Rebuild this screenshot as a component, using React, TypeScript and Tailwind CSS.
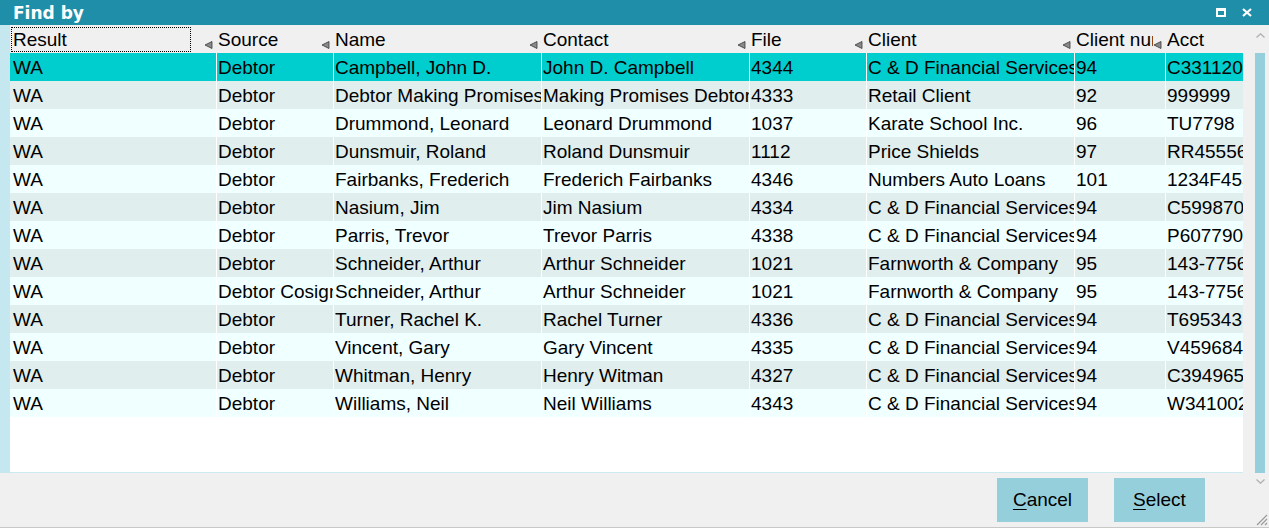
import React from "react";

const cols = [
  { key: "result", label: "Result", w: "w-[206px]", arrow: true },
  { key: "source", label: "Source", w: "w-[117px]", arrow: true },
  { key: "name", label: "Name", w: "w-[208px]", arrow: true },
  { key: "contact", label: "Contact", w: "w-[208px]", arrow: true },
  { key: "file", label: "File", w: "w-[117px]", arrow: true },
  { key: "client", label: "Client", w: "w-[208px]", arrow: true },
  { key: "clientnum", label: "Client number", w: "w-[91px]", arrow: true },
  { key: "acct", label: "Acct", w: "w-[78px]", arrow: false },
];

const CD = "C & D Financial Services";
const rows: string[][] = [
  ["WA", "Debtor", "Campbell, John D.", "John D. Campbell", "4344", CD, "94", "C331120"],
  ["WA", "Debtor", "Debtor Making Promises", "Making Promises Debtor", "4333", "Retail Client", "92", "999999"],
  ["WA", "Debtor", "Drummond, Leonard", "Leonard Drummond", "1037", "Karate School Inc.", "96", "TU7798"],
  ["WA", "Debtor", "Dunsmuir, Roland", "Roland Dunsmuir", "1112", "Price Shields", "97", "RR455561"],
  ["WA", "Debtor", "Fairbanks, Frederich", "Frederich Fairbanks", "4346", "Numbers Auto Loans", "101", "1234F453"],
  ["WA", "Debtor", "Nasium, Jim", "Jim Nasium", "4334", CD, "94", "C599870"],
  ["WA", "Debtor", "Parris, Trevor", "Trevor Parris", "4338", CD, "94", "P607790"],
  ["WA", "Debtor", "Schneider, Arthur", "Arthur Schneider", "1021", "Farnworth & Company", "95", "143-77561"],
  ["WA", "Debtor Cosigner", "Schneider, Arthur", "Arthur Schneider", "1021", "Farnworth & Company", "95", "143-77561"],
  ["WA", "Debtor", "Turner, Rachel K.", "Rachel Turner", "4336", CD, "94", "T695343"],
  ["WA", "Debtor", "Vincent, Gary", "Gary Vincent", "4335", CD, "94", "V459684"],
  ["WA", "Debtor", "Whitman, Henry", "Henry Witman", "4327", CD, "94", "C394965"],
  ["WA", "Debtor", "Williams, Neil", "Neil Williams", "4343", CD, "94", "W341002"],
];

function SortArrow() {
  return (
    <svg width="9" height="8" viewBox="0 0 9 8" className="shrink-0 mb-[4px] mr-[3px]">
      <polygon points="8,0.5 8,7.5 1,4" fill="#8a8a8a" stroke="#3a3a3a" strokeWidth="0.8" />
    </svg>
  );
}

function Chevron({ up }: { up?: boolean }) {
  return (
    <svg width="9" height="5" viewBox="0 0 9 5">
      <polyline
        points={up ? "0.5,4.5 4.5,0.8 8.5,4.5" : "0.5,0.5 4.5,4.2 8.5,0.5"}
        fill="none"
        stroke="#b0b0b0"
        strokeWidth="1.3"
      />
    </svg>
  );
}

export default function App() {
  return (
    <div
      className="w-[1269px] h-[528px] bg-[#f0f0f0] flex flex-col overflow-hidden text-black"
      style={{ fontFamily: '"Liberation Sans", Arial, sans-serif' }}
    >
      {/* Title bar */}
      <div className="h-[25px] bg-[#1f8fa9] flex items-center justify-between pl-[13px] pr-[17px] shrink-0">
        <span
          className="text-white font-bold text-[17px] leading-none pt-[1px]"
          style={{ fontFamily: '"DejaVu Sans", sans-serif' }}
        >
          Find by
        </span>
        <div className="flex items-center gap-[16px]">
          <div className="w-[10px] h-[9px] border-white border-[2px] border-t-[3px]" />
          <svg width="10" height="9" viewBox="0 0 10 9">
            <path d="M1 1 L9 8 M9 1 L1 8" stroke="white" strokeWidth="2.2" />
          </svg>
        </div>
      </div>

      {/* Body */}
      <div className="flex flex-1 border-b border-[#c8c8c8]">
        {/* Left column: table + buttons */}
        <div className="w-[1243px] flex flex-col">
          <div className="h-[448px] flex">
            <div className="w-[10px] bg-[#c4e7f0]" />
            <div className="w-[1233px] flex flex-col bg-white border-b border-[#cfe9f0] text-[19px]">
              {/* Header */}
              <div className="h-[28px] flex bg-[#f0f0f0] shrink-0">
                {cols.map((c, i) => (
                  <div
                    key={c.key}
                    className={`${c.w} relative flex items-end h-full shrink-0 ${i === 0 ? "pl-[3px]" : "pl-[2px]"}`}
                  >
                    <span className="flex-1 min-w-0 overflow-hidden whitespace-nowrap self-stretch pt-[1px] leading-[27px]">
                      {c.label}
                    </span>
                    {c.arrow && <SortArrow />}
                    {i === 0 && (
                      <div className="absolute left-[1px] top-[2px] w-[180px] h-[25px] border border-dotted border-black" />
                    )}
                  </div>
                ))}
              </div>
              {/* Rows */}
              {rows.map((r, ri) => (
                <div
                  key={ri}
                  className={`h-[28px] flex shrink-0 ${
                    ri === 0 ? "bg-[#00cdcd]" : ri % 2 === 1 ? "bg-[#e0eeee]" : "bg-[#f0ffff]"
                  }`}
                >
                  {r.map((cell, ci) => (
                    <div
                      key={ci}
                      className={`${cols[ci].w} shrink-0 overflow-hidden whitespace-nowrap pt-[1px] leading-[27px] ${
                        ci === 0 ? "pl-[3px]" : "pl-[1px] border-l border-white"
                      }`}
                    >
                      {cell}
                    </div>
                  ))}
                </div>
              ))}
            </div>
          </div>
          {/* Buttons */}
          <div className="flex-1 flex justify-end items-start pt-[5px] pr-[38px] gap-[26px] text-[19px]">
            <button className="w-[91px] h-[44px] bg-[#96cfdc] flex items-center justify-center pt-[1px]">
              <span>
                <span className="underline underline-offset-[3px]">C</span>ancel
              </span>
            </button>
            <button className="w-[91px] h-[44px] bg-[#96cfdc] flex items-center justify-center pt-[1px]">
              <span>
                <span className="underline underline-offset-[3px]">S</span>elect
              </span>
            </button>
          </div>
        </div>

        {/* Scrollbar column */}
        <div className="w-[26px] flex flex-col items-center">
          <div className="h-[28px] flex items-start justify-center pt-[8px] pl-[8px]">
            <Chevron up />
          </div>
          <div className="h-[420px] w-[10px] ml-[8px] bg-[#96cfdc]" />
          <div className="pt-[6px] pl-[8px]">
            <Chevron />
          </div>
          <div className="flex-1" />
          <div className="self-end mb-[1px] mr-[1px]">
            <svg width="14" height="14" viewBox="0 0 14 14">
              <path d="M13 3 L3 13 M13 7 L7 13 M13 11 L11 13" stroke="#9a9a9a" strokeWidth="1.2" />
            </svg>
          </div>
        </div>
      </div>
    </div>
  );
}
